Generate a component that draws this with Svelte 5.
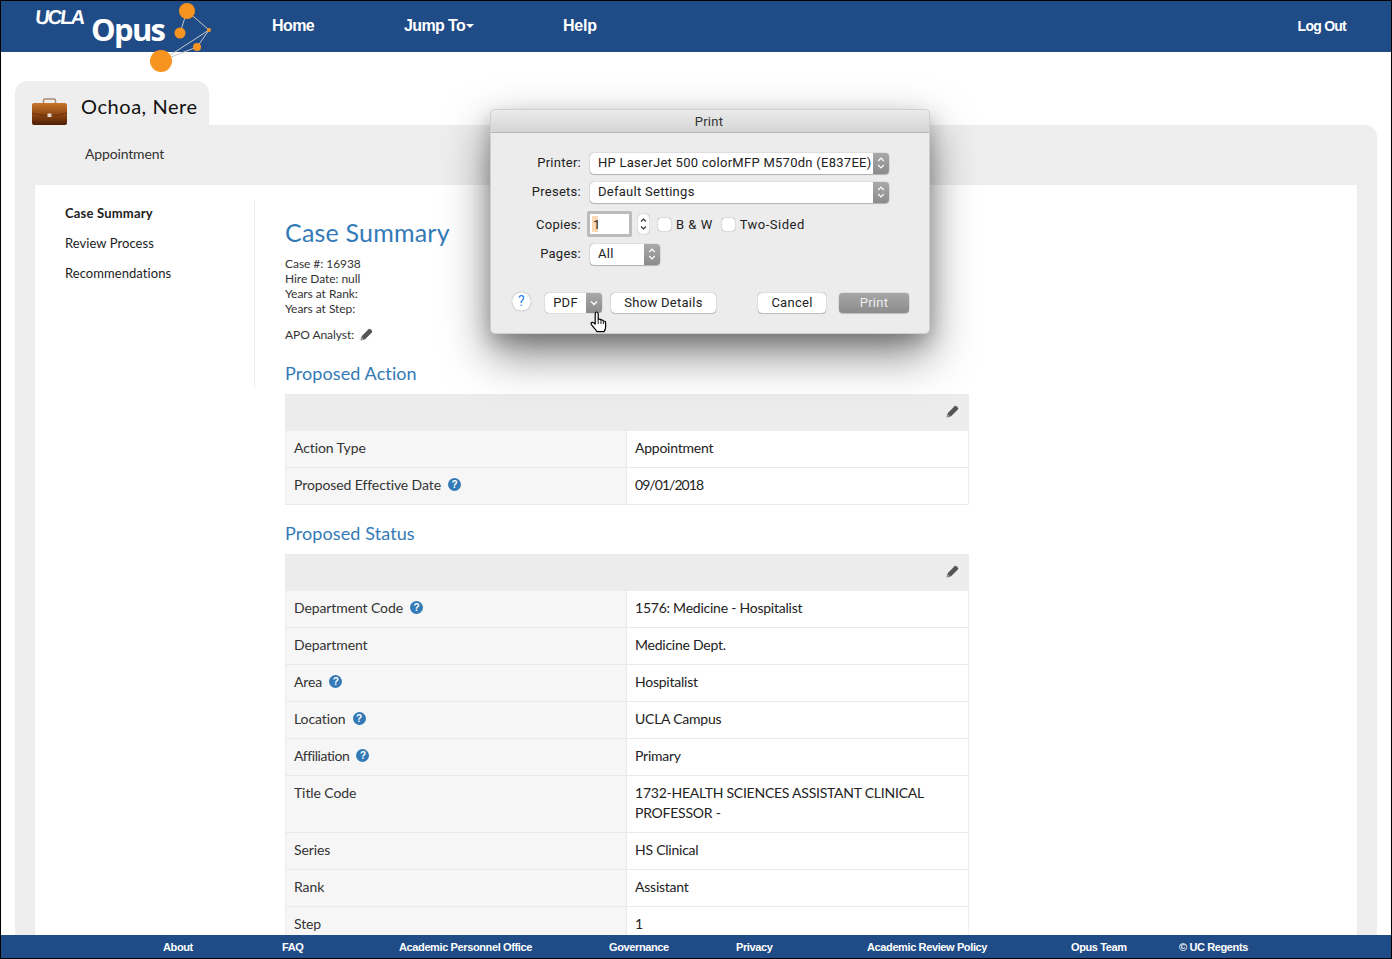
<script>
  const side = ['Case Summary', 'Review Process', 'Recommendations'];
  const info = ['Case #: 16938', 'Hire Date: null', 'Years at Rank:', 'Years at Step:'];
  const action = [
    { k: 'Action Type', v: ['Appointment'] },
    { k: 'Proposed Effective Date', v: ['09/01/2018'], help: true, num: true }
  ];
  const status = [
    { k: 'Department Code', v: ['1576: Medicine - Hospitalist'], help: true },
    { k: 'Department', v: ['Medicine Dept.'] },
    { k: 'Area', v: ['Hospitalist'], help: true },
    { k: 'Location', v: ['UCLA Campus'], help: true },
    { k: 'Affiliation', v: ['Primary'], help: true, tight: true },
    { k: 'Title Code', v: ['1732-HEALTH SCIENCES ASSISTANT CLINICAL', 'PROFESSOR -'] },
    { k: 'Series', v: ['HS Clinical'] },
    { k: 'Rank', v: ['Assistant'] },
    { k: 'Step', v: ['1'] }
  ];
  const foot = [
    ['About', 163], ['FAQ', 282], ['Academic Personnel Office', 399], ['Governance', 609],
    ['Privacy', 736], ['Academic Review Policy', 867], ['Opus Team', 1071], ['© UC Regents', 1179]
  ];
  const pencil = 'M1 13 L2 8.5 L9.2 1.3 Q10.2 .5 11.2 1.3 L12.8 2.9 Q13.6 3.9 12.8 4.9 L5.5 12 Z';
</script>

{#snippet pen(cls)}
  <svg class={cls} viewBox="0 0 14 14"><path d={pencil} fill="#555" /><path d="M1 13 L1.8 10 L4 12.2 Z" fill="#fff" stroke="#555" stroke-width=".7" /></svg>
{/snippet}

{#snippet rows(list)}
  {#each list as r}
    <div class="row">
      <div class="key" class:tight={r.tight}><span>{r.k}</span>{#if r.help}<span class="help">?</span>{/if}</div>
      <div class="val" class:num={r.num}>{#each r.v as l}<div>{l}</div>{/each}</div>
    </div>
  {/each}
{/snippet}

{#snippet stepper()}
  <span class="step"><svg viewBox="0 0 8 14" width="8" height="14"><path d="M1.2 5 L4 2.2 L6.8 5 M1.2 9 L4 11.8 L6.8 9" fill="none" stroke="#fff" stroke-width="1.2" /></svg></span>
{/snippet}

<div class="page">
  <header class="top">
    <div class="logo">
      <span class="ucla">UCLA</span><span class="opus">Opus</span>
    </div>
    <nav class="nav">
      <span class="home">Home</span>
      <span class="jump">Jump To<i class="caret"></i></span>
      <span class="helplink">Help</span>
    </nav>
    <span class="logout">Log Out</span>
  </header>

  <svg class="mark" viewBox="0 0 80 80" width="80" height="80">
    <g stroke="#c9c9c9" stroke-width="1" fill="none">
      <path d="M47 10 L69 29 L21 60 L57 46 L69 29 M47 10 L40 32" />
    </g>
    <g fill="#f79321">
      <circle cx="47" cy="10" r="8" /><circle cx="40" cy="32" r="5.5" /><circle cx="69" cy="29" r="2" /><circle cx="57" cy="46" r="4" /><circle cx="21" cy="60" r="11" />
    </g>
  </svg>

  <main class="main">
    <div class="tab">
      <svg class="case" viewBox="0 0 35 27" width="35" height="27">
        <defs><linearGradient id="br" x1="0" y1="0" x2="0" y2="1"><stop offset="0" stop-color="#c9762c" /><stop offset=".55" stop-color="#8a4412" /><stop offset="1" stop-color="#4f1e05" /></linearGradient></defs>
        <path d="M11.5 6 V2.5 Q11.5 1 13 1 H22 Q23.5 1 23.5 2.5 V6" fill="none" stroke="#a98b74" stroke-width="1.5" />
        <rect x="0" y="5" width="35" height="22" rx="2" fill="url(#br)" />
        <path d="M0 15 Q17 20 35 15" fill="none" stroke="#5e2a08" stroke-width=".7" />
        <rect x="15.5" y="15.5" width="4" height="3.5" rx=".6" fill="#e5d9cf" />
      </svg>
      <span class="name">Ochoa, Nere</span>
    </div>
    <section class="panel">
      <div class="subtitle">Appointment</div>
      <div class="sheet">
        <aside class="side">
          {#each side as s, i}<div class:active={i === 0}>{s}</div>{/each}
        </aside>
        <div class="content">
          <h1>Case Summary</h1>
          <div class="info">{#each info as l}<div>{l}</div>{/each}</div>
          <div class="apo">APO Analyst: {@render pen('penS')}</div>
          <h2 class="first">Proposed Action</h2>
          <div class="table">
            <div class="thead">{@render pen('penT')}</div>
            {@render rows(action)}
          </div>
          <h2>Proposed Status</h2>
          <div class="table">
            <div class="thead">{@render pen('penT')}</div>
            {@render rows(status)}
          </div>
        </div>
      </div>
    </section>
  </main>

  <footer class="foot">
    {#each foot as f}<span style="left:{f[1] - 1}px">{f[0]}</span>{/each}
  </footer>

  <div class="dialog">
    <div class="title">Print</div>
    <div class="form">
      <div class="line l1"><label for="p">Printer:</label>
        <div class="select wide" id="p"><span>HP LaserJet 500 colorMFP M570dn (E837EE)</span>{@render stepper()}</div></div>
      <div class="line l2"><label for="q">Presets:</label>
        <div class="select wide" id="q"><span>Default Settings</span>{@render stepper()}</div></div>
      <div class="line l3"><label for="c">Copies:</label>
        <div class="copies" id="c"><span class="sel">1</span></div>
        <span class="spin"><svg viewBox="0 0 11 20" width="11" height="20"><path d="M3 7.5 L5.5 5 L8 7.5 M3 12.5 L5.5 15 L8 12.5" fill="none" stroke="#333" stroke-width="1.1" /></svg></span>
        <span class="cb"></span><span class="cbl">B &amp; W</span>
        <span class="cb c2"></span><span class="cbl">Two-Sided</span></div>
      <div class="line l4"><label for="r">Pages:</label>
        <div class="select small" id="r"><span>All</span>{@render stepper()}</div></div>
    </div>
    <div class="actions">
      <span class="q">?</span>
      <div class="pdf"><span>PDF</span><span class="pdfarrow"><svg viewBox="0 0 10 8" width="10" height="8"><path d="M2 2.5 L5 5.5 L8 2.5" fill="none" stroke="#fff" stroke-width="1.3" /></svg></span></div>
      <div class="btn details">Show Details</div>
      <div class="btn cancel">Cancel</div>
      <div class="btn print">Print</div>
    </div>
  </div>

  <svg class="hand" viewBox="0 0 17 22" width="17" height="22">
    <path d="M5.2 13 V3 Q5.2 1 6.7 1 Q8.2 1 8.2 3 V8.5 Q10.2 7.6 11 9 Q12.8 8.4 13.4 10 Q15.6 9.8 15.6 12 V16 Q15.6 18.5 14 20.6 H7 Q5.6 18.6 3.6 16.4 L1.4 13.6 Q.6 12 2 11.4 Q3.2 11 5.2 13 Z" fill="#fff" stroke="#000" stroke-width="1.2" stroke-linejoin="round" />
    <path d="M8.2 9 V13 M11 9.2 V13 M13.4 10.2 V13" stroke="#000" stroke-width=".9" fill="none" />
  </svg>
</div>

<style>
  :global(body) { margin: 0; background: #fff; }
  .page {
    position: relative; width: 1392px; height: 959px; box-sizing: border-box; overflow: hidden;
    border: 1px solid #000; background: #fff; color: #333;
    font-family: Lato, "Open Sans", sans-serif;
  }
  .top {
    position: relative; height: 51px; background: #1f4b87; color: #fff; display: flex; align-items: center;
    font-family: "Liberation Sans", Arial, sans-serif;
  }
  .logo { width: 271px; flex: none; height: 51px; position: relative; }
  .ucla { position: absolute; left: 34px; top: 5px; font: italic bold 20px/22px "Liberation Sans", sans-serif; letter-spacing: -1.9px; transform: skewX(4deg); }
  .opus { position: absolute; left: 90px; top: 10px; font: bold 31px/36px "Open Sans", sans-serif; letter-spacing: -1.7px; }
  .nav { display: flex; font-size: 16px; font-weight: bold; letter-spacing: -.6px; margin-top: -1px; }
  .home { width: 132px; }
  .jump { width: 159px; }
  .helplink { letter-spacing: -.2px; }
  .caret { display: inline-block; border: 4px solid transparent; border-top-color: #fff; border-bottom: 0; margin-left: 1px; vertical-align: 3px; }
  .logout { margin-left: auto; margin-right: 45px; font-size: 14px; font-weight: bold; letter-spacing: -.75px; margin-top: -1px; }
  .mark { position: absolute; left: 139px; top: 0; pointer-events: none; }
  .main { padding: 29px 14px 0; }
  .tab {
    width: 194px; height: 44px; background: #eee; border-radius: 12px 12px 0 0; display: flex; align-items: flex-start;
  }
  .case { margin: 17px 0 0 17px; }
  .name { margin: 13px 0 0 14px; font-size: 20px; line-height: 24px; color: #111; letter-spacing: .55px; white-space: nowrap; }
  .panel { background: #eee; border-radius: 0 12px 0 0; padding: 0 20px; height: 900px; }
  .subtitle { height: 60px; padding-left: 50px; line-height: 57px; font-size: 14px; color: #333; letter-spacing: -.15px; box-sizing: border-box; }
  .sheet { background: #fff; display: flex; height: 840px; }
  .side { width: 220px; height: 188px; margin-top: 15px; border-right: 1px solid #eee; padding-left: 30px; box-sizing: border-box; flex: none; font-size: 13px; color: #222; }
  .side div { height: 30px; line-height: 26px; letter-spacing: .06px; }
  .side .active { font-weight: bold; letter-spacing: .2px; }
  .content { margin-left: 30px; width: 684px; }
  h1 { margin: 32px 0 0; font-size: 25px; line-height: 31px; font-weight: 400; color: #337ab7; letter-spacing: .2px; }
  .info { margin-top: 8px; font-size: 12px; line-height: 15px; color: #333; letter-spacing: -.05px; }
  .apo { margin-top: 11px; font-size: 12px; line-height: 16px; display: flex; align-items: center; letter-spacing: -.05px; }
  .penS { width: 13px; height: 13px; margin-left: 6px; margin-top: -1px; }
  h2 { margin: 17px 0 10px; font-size: 18px; line-height: 22px; font-weight: 400; color: #337ab7; letter-spacing: .1px; }
  h2.first { margin-top: 19px; margin-bottom: 10px; }
  .table { border-left: 1px solid #eee; border-right: 1px solid #eee; }
  .thead { height: 37px; background: #ececec; display: flex; align-items: center; justify-content: flex-end; padding-right: 10px; margin: 0 -1px; }
  .penT { width: 13px; height: 13px; margin-top: -2px; }
  .row { display: flex; border-bottom: 1px solid #e9e9e9; font-size: 14px; line-height: 20px; box-sizing: border-box; }
  .key { width: 341px; flex: none; box-sizing: border-box; padding: 7px 8px 9px; background: #f6f6f6; border-right: 1px solid #e9e9e9; display: flex; align-items: flex-start; color: #333; letter-spacing: -.1px; }
  .key.tight span:first-child { letter-spacing: -.42px; }
  .val { padding: 7px 8px 9px; color: #222; letter-spacing: -.24px; }
  .val.num { letter-spacing: -.95px; }
  .help {
    width: 13px; height: 13px; margin: 3px 0 0 7px; border-radius: 50%; background: #337ab7; color: #fff;
    font: bold 10px/13px "Liberation Sans", sans-serif; text-align: center;
  }
  .foot { position: absolute; left: 0; right: 0; bottom: 0; height: 23px; background: #1f4b87; color: #fff; font: bold 11px/24px "Liberation Sans", sans-serif; letter-spacing: -.38px; }
  .foot span { position: absolute; top: 0; white-space: nowrap; }

  .dialog {
    position: absolute; left: 489px; top: 108px; width: 440px; height: 225px; box-sizing: border-box;
    background: #ececec; border: 1px solid #cfcfcf; border-radius: 5px;
    box-shadow: 0 20px 45px rgba(0,0,0,.5), 0 8px 18px rgba(0,0,0,.18);
    font-family: Roboto, "Open Sans", sans-serif; font-size: 13px; color: #222; letter-spacing: .27px;
  }
  .title {
    height: 22px; line-height: 24px; text-align: center; border-bottom: 1px solid #b5b5b5; border-radius: 5px 5px 0 0;
    background: linear-gradient(#ebebeb, #d5d5d5); color: #333; padding-right: 2px;
  }
  .form { height: 150px; position: relative; }
  .line { position: absolute; left: 0; right: 0; display: flex; align-items: center; height: 22px; }
  .l1 { top: 19px; } .l2 { top: 48px; } .l3 { top: 80px; } .l4 { top: 110px; }
  label { width: 90px; text-align: right; flex: none; color: #222; }
  .l1 label, .l2 label, .l4 label { margin-top: -2px; }
  .select {
    margin-left: 9px; height: 21px; background: #fff; border-radius: 4px; box-shadow: 0 0 1px rgba(0,0,0,.6), 0 1px 1px rgba(0,0,0,.2);
    display: flex; justify-content: space-between; align-items: center; padding-left: 8px; box-sizing: border-box; overflow: hidden; white-space: nowrap;
  }
  .select > span:first-child { margin-top: -2px; }
  .wide { width: 299px; }
  .small { width: 70px; }
  .step { width: 16px; height: 21px; background: linear-gradient(#a9a9a9, #8b8b8b); display: flex; align-items: center; justify-content: center; flex: none; }
  .copies { width: 39px; height: 20px; background: #fff; border: 3px solid #bbb; border-radius: 2px; line-height: 21px; flex: none; margin-left: 6px; letter-spacing: 0; }
  .sel { background: #fbd9b4; display: inline-block; width: 5px; padding-left: 1px; margin-left: 2px; height: 16px; line-height: 18px; vertical-align: top; margin-top: 2px; }
  .spin { margin-left: 6px; width: 11px; height: 20px; background: #fff; border-radius: 4px; box-shadow: 0 0 1px rgba(0,0,0,.6); display: flex; flex: none; }
  .cb { margin-left: 9px; width: 13px; height: 13px; background: #fff; border-radius: 3px; box-shadow: 0 0 1px rgba(0,0,0,.7); flex: none; }
  .c2 { margin-left: 9px; }
  .cbl { margin-left: 5px; letter-spacing: .5px; }
  .actions { position: relative; height: 40px; }
  .actions > * { position: absolute; top: 10px; }
  .q { left: 21px; width: 19px; height: 19px; border-radius: 50%; background: #fff; box-shadow: 0 0 1px rgba(0,0,0,.6); color: #2a7ff6; text-align: center; line-height: 19px; font-size: 14px; top: 9px; }
  .pdf { left: 54px; width: 57px; height: 20px; background: #fff; border-radius: 4px; box-shadow: 0 0 1px rgba(0,0,0,.6); display: flex; overflow: hidden; line-height: 20px; }
  .pdf span:first-child { width: 41px; text-align: center; }
  .pdfarrow { width: 16px; background: linear-gradient(#a9a9a9, #8b8b8b); display: flex; align-items: center; justify-content: center; }
  .btn { height: 20px; border-radius: 4px; background: #fff; box-shadow: 0 0 1px rgba(0,0,0,.6), 0 1px 1px rgba(0,0,0,.15); line-height: 20px; text-align: center; }
  .details { left: 120px; width: 105px; }
  .cancel { left: 267px; width: 68px; }
  .print { left: 348px; width: 70px; background: linear-gradient(#a6a6a6, #8c8c8c); color: #eee; }
  .hand { position: absolute; left: 589px; top: 310px; }
</style>
